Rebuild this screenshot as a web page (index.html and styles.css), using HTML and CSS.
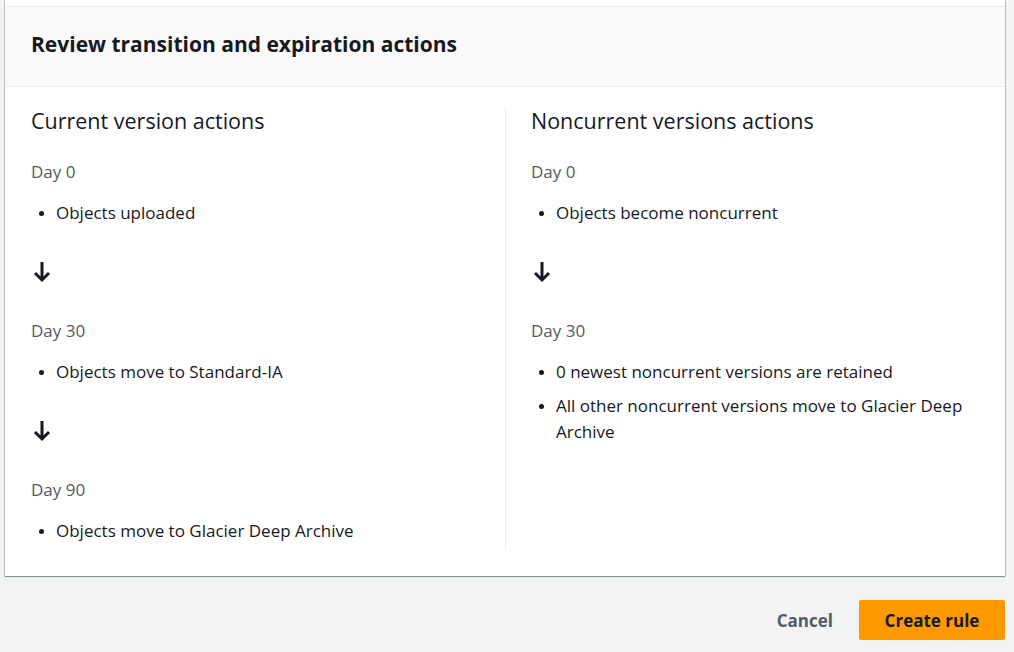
FILE: index.html
```html
<!DOCTYPE html>
<html lang="en">
<head>
<meta charset="utf-8">
<title>Review transition and expiration actions</title>
<link rel="stylesheet" href="styles.css">
</head>
<body>
<div class="page">
  <section class="card">
    <div class="card-top"></div>
    <header class="card-header">
      <h2 class="card-title">Review transition and expiration actions</h2>
    </header>
    <div class="card-body">
      <div class="col">
        <h3 class="col-title">Current version actions</h3>
        <div class="step">
          <div class="day">Day 0</div>
          <ul class="actions"><li>Objects uploaded</li></ul>
        </div>
        <div class="arrow"><svg viewBox="0 0 18 22" width="18" height="22"><path d="M9 1 V19 M2 12 L9 19 L16 12" fill="none" stroke="#16191f" stroke-width="3" stroke-linecap="butt" stroke-linejoin="miter"/></svg></div>
        <div class="step">
          <div class="day">Day 30</div>
          <ul class="actions"><li>Objects move to Standard-IA</li></ul>
        </div>
        <div class="arrow"><svg viewBox="0 0 18 22" width="18" height="22"><path d="M9 1 V19 M2 12 L9 19 L16 12" fill="none" stroke="#16191f" stroke-width="3" stroke-linecap="butt" stroke-linejoin="miter"/></svg></div>
        <div class="step">
          <div class="day">Day 90</div>
          <ul class="actions"><li>Objects move to Glacier Deep Archive</li></ul>
        </div>
      </div>
      <div class="col col-right">
        <h3 class="col-title">Noncurrent versions actions</h3>
        <div class="step">
          <div class="day">Day 0</div>
          <ul class="actions"><li>Objects become noncurrent</li></ul>
        </div>
        <div class="arrow"><svg viewBox="0 0 18 22" width="18" height="22"><path d="M9 1 V19 M2 12 L9 19 L16 12" fill="none" stroke="#16191f" stroke-width="3" stroke-linecap="butt" stroke-linejoin="miter"/></svg></div>
        <div class="step">
          <div class="day">Day 30</div>
          <ul class="actions">
            <li>0 newest noncurrent versions are retained</li>
            <li>All other noncurrent versions move to Glacier Deep Archive</li>
          </ul>
        </div>
      </div>
    </div>
  </section>
  <div class="footer-actions">
    <button class="btn-link" type="button">Cancel</button>
    <button class="btn-primary" type="button">Create rule</button>
  </div>
</div>
</body>
</html>
```
FILE: styles.css
```css
* { box-sizing: border-box; }
html, body { margin: 0; padding: 0; }
body {
  background: #f2f3f3;
  font-family: "Open Sans", "Noto Sans", "Liberation Sans", sans-serif;
  color: #16191f;
  font-size: 17px;
}
.page {
  padding: 0 9px 0 5px;
}
.card {
  background: #fff;
  box-shadow: 0 1px 1px 0 rgba(0, 28, 36, 0.45), 1px 0 0 0 rgba(0, 28, 36, 0.18), -1px 0 0 0 rgba(0, 28, 36, 0.18);
}
.card-top {
  height: 7px;
  border-bottom: 1px solid #eaeded;
}
.card-header {
  background: #fafafa;
  border-bottom: 1px solid #eaeded;
  height: 80px;
  display: flex;
  align-items: center;
  padding: 0 26px 5px;
}
.card-title {
  margin: 0;
  font-size: 21px;
  font-weight: 700;
  line-height: 26px;
  color: #16191f;
}
.card-body {
  display: grid;
  grid-template-columns: 1fr 1fr;
  padding: 20px 0 26px;
}
.col {
  padding: 0 26px 6px;
}
.col-right {
  border-left: 1px solid #eaeded;
  padding-left: 25px;
}
.col-title {
  margin: 0;
  font-size: 21.5px;
  font-weight: 400;
  line-height: 28px;
  color: #16191f;
}
.step { margin-top: 26px; }
.day {
  color: #545b64;
  font-size: 17px;
  line-height: 22px;
}
.actions {
  margin: 17px 0 0;
  padding: 0 0 0 25px;
  line-height: 26px;
}
.actions li { margin: 0 0 8px; }
.actions li:last-child { margin-bottom: 0; }
.actions li::marker { font-size: 14px; }
.arrow {
  margin-top: 35px;
  height: 22px;
  padding-left: 2px;
}
.arrow svg { display: block; }
.col .arrow + .step { margin-top: 37px; }
.footer-actions {
  display: flex;
  justify-content: flex-end;
  align-items: center;
  gap: 26px;
  padding-top: 24px;
}
.btn-link {
  background: none;
  border: none;
  font-family: inherit;
  font-size: 17px;
  font-weight: 700;
  color: #545b64;
  padding: 0;
}
.btn-primary {
  background: #ff9900;
  border: 1px solid #ff9900;
  border-radius: 2px;
  font-family: inherit;
  font-size: 17px;
  font-weight: 700;
  color: #16191f;
  height: 40px;
  width: 146px;
  padding: 0;
}
```
